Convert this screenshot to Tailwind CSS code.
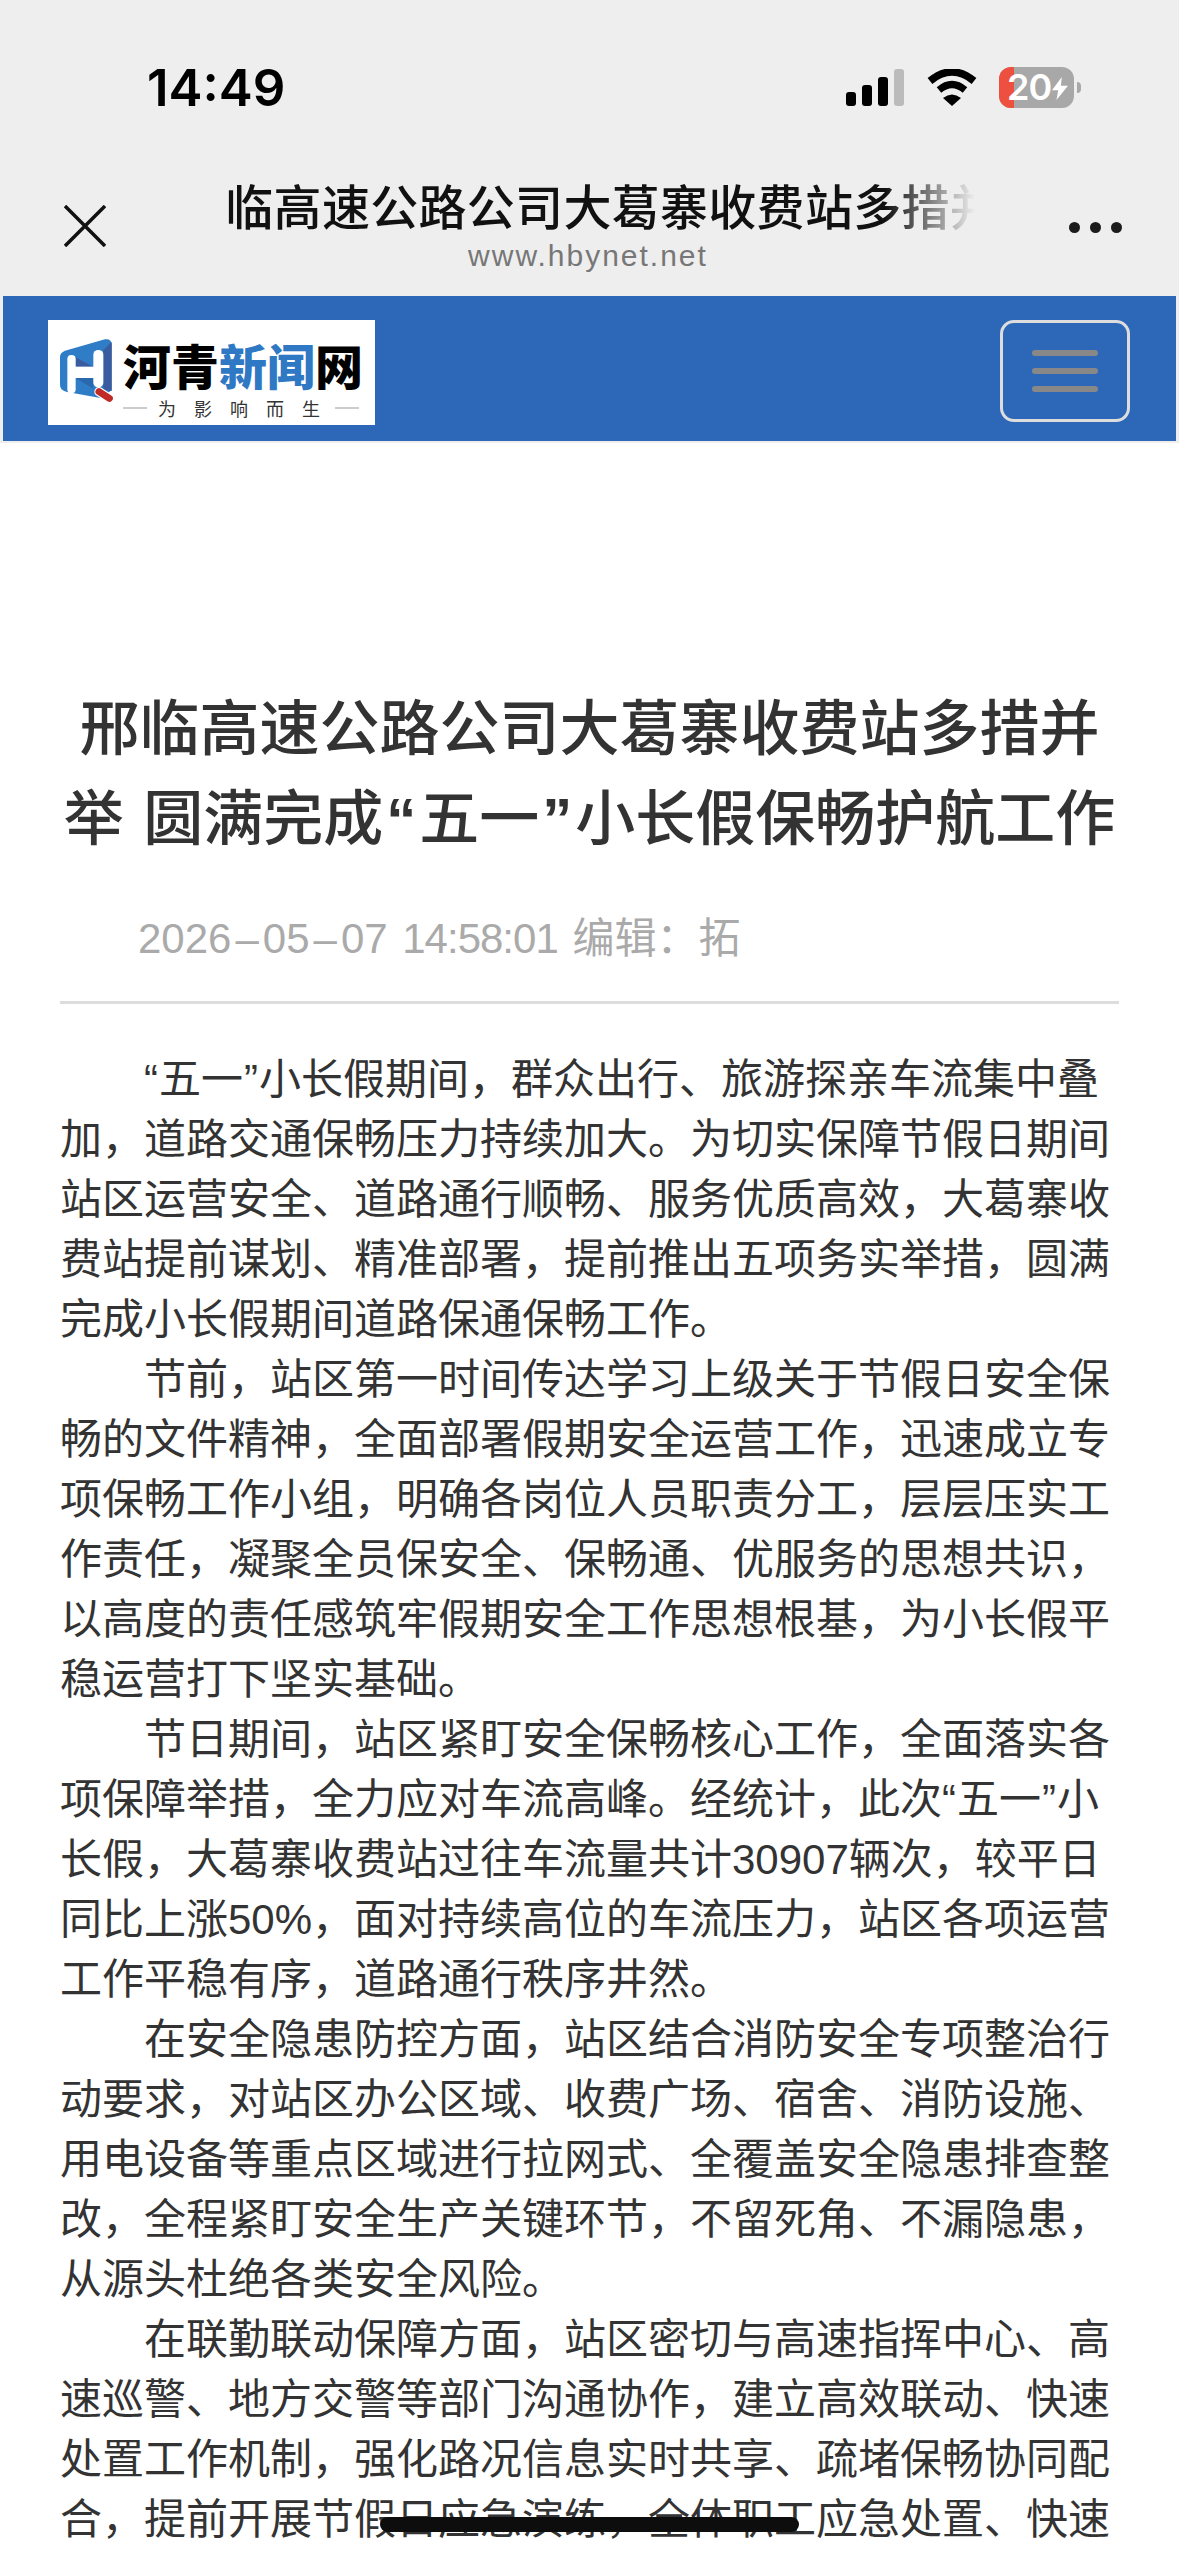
<!DOCTYPE html>
<html lang="zh-CN">
<head>
  <meta charset="UTF-8">
  <meta name="viewport" content="width=device-width, initial-scale=1.0">
  <title>邢临高速公路公司大葛寨收费站多措并举 圆满完成“五一”小长假保畅护航工作</title>
  <script src="https://cdn.jsdelivr.net/npm/@tailwindcss/browser@4"></script>
</head>
<body class="bg-white font-['Liberation_Sans','Noto_Sans_CJK_SC',sans-serif]">
  <div class="relative w-[1179px] h-[2556px] overflow-hidden">
    <!-- browser chrome -->
    <div class="h-[296px] bg-[#eeeeee]">
      <div class="flex h-[116px] pt-[60px]">
        <div class="ml-[147px] w-[135px] h-[56px] text-[51px] leading-[56px] font-semibold text-black font-['Inter',sans-serif]">14:49</div>
        <svg class="ml-[564px] mt-[9px]" width="58" height="37" viewBox="0 0 58 37">
          <rect x="0" y="23" width="10" height="14" rx="3" fill="#000"/>
          <rect x="16" y="16" width="10" height="21" rx="3" fill="#000"/>
          <rect x="32" y="8" width="10" height="29" rx="3" fill="#000"/>
          <rect x="48" y="0" width="10" height="37" rx="3" fill="#bbbbbb"/>
        </svg>
        <svg class="ml-[23px] mt-[9px]" width="50" height="37" viewBox="0 0 50 37">
          <path d="M3 12 Q25 -6 47 12" fill="none" stroke="#000" stroke-width="7.5"/>
          <path d="M12 21 Q25 10 38 21" fill="none" stroke="#000" stroke-width="7"/>
          <path d="M25 37 L16 29 Q25 22 34 29 Z" fill="#000"/>
        </svg>
        <div class="relative ml-[22px] mt-[7px] w-[75px] h-[41px] rounded-[12px] overflow-hidden bg-[#a8a8a8]">
          <div class="w-[15px] h-full bg-[#ee5040]"></div>
          <div class="absolute left-[8px] top-0 h-[41px] text-[36px] leading-[41px] font-semibold tracking-[-1px] text-white font-['Inter',sans-serif]">20</div>
          <svg class="absolute left-[53px] top-[8px]" width="16" height="27" viewBox="0 0 18 26">
            <path d="M11 0 L0 15 H7 L5 26 L18 10 H10 Z" fill="#fff"/>
          </svg>
        </div>
        <div class="ml-[3px] mt-[22px] w-[4px] h-[11px] rounded-r-full bg-[#a8a8a8]"></div>
      </div>
      <div class="flex h-[180px] pl-[64px]">
        <svg class="mt-[89px] shrink-0" width="42" height="42" viewBox="0 0 42 42">
          <path d="M1 1 L41 41 M41 1 L1 41" stroke="#111" stroke-width="3.5"/>
        </svg>
        <div class="ml-[119px] w-[750px] shrink-0">
          <div class="mt-[63px] h-[60px] overflow-hidden whitespace-nowrap text-[48px] leading-[60px] font-medium tracking-[0.3px] text-[#111111] [mask-image:linear-gradient(to_right,black_88%,transparent_100%)]">
            <span class="block -ml-[48px]">邢临高速公路公司大葛寨收费站多措并举 圆满完成“五一”小长假保畅护航工作</span>
          </div>
          <div class="-mt-[1px] h-[36px] pr-[24px] text-center text-[30px] leading-[36px] tracking-[2px] text-[#777777]">www.hbynet.net</div>
        </div>
        <div class="ml-[94px] mt-[106px] flex gap-[10px]">
          <span class="w-[11px] h-[11px] rounded-full bg-[#1c1c1c]"></span>
          <span class="w-[11px] h-[11px] rounded-full bg-[#1c1c1c]"></span>
          <span class="w-[11px] h-[11px] rounded-full bg-[#1c1c1c]"></span>
        </div>
      </div>
    </div>

    <!-- site header -->
    <div class="bg-[#eeeeee] px-[3px] pb-[2px]">
      <div class="flex h-[145px] items-start justify-between bg-[#2d68b8] pl-[45px] pr-[46px] pt-[24px]">
        <div class="relative flex w-[327px] h-[105px] bg-white pl-[11px] pt-[19px]">
          <svg class="shrink-0" width="54" height="66" viewBox="27 27 162 198">
            <path d="M45 62 L165 28 Q185 25 185 45 L185 180 L155 205 L48 185 Q30 180 30 165 L30 80 Q30 68 45 62Z" fill="#2f7cc7"/>
            <path d="M160 60 L185 36 L185 183 L160 180Z" fill="#3a5c9e"/>
            <path d="M77 82 L130 110 L77 110Z" fill="#3a5c9e"/>
            <path d="M77 144 H130 V176Z" fill="#2a68ad"/>
            <rect x="52" y="75" width="25" height="115" rx="12" fill="#fff"/>
            <rect x="130" y="60" width="30" height="112" rx="14" fill="#fff"/>
            <rect x="70" y="110" width="65" height="34" fill="#fff"/>
            <path d="M147 185 L178 205" stroke="#fff" stroke-width="28" stroke-linecap="round"/>
            <path d="M147 185 L178 205" stroke="#c02b27" stroke-width="21" stroke-linecap="round"/>
          </svg>
          <div class="ml-[10px] w-[237px]">
            <div class="h-[50px] whitespace-nowrap text-[48px] leading-[50px] font-black font-['Noto_Sans_CJK_SC',sans-serif] text-black">河青<span class="text-[#2f78c4]">新闻</span>网</div>
            <div class="mt-[7px] flex h-[24px] items-center text-[18px] leading-[24px] text-[#333333] font-['Noto_Sans_CJK_SC',sans-serif]">
              <span class="w-[24px] h-[2px] bg-[#cccccc]"></span>
              <div class="mx-[11px] mr-[15px] flex gap-[18px]">
                <span>为</span><span>影</span><span>响</span><span>而</span><span>生</span>
              </div>
              <span class="w-[24px] h-[2px] bg-[#cccccc]"></span>
            </div>
          </div>
        </div>
        <div class="flex flex-col items-center gap-[12px] w-[130px] h-[102px] rounded-[14px] border-[3px] border-[#dddddd] pt-[27px]">
          <span class="w-[66px] h-[6px] rounded-full bg-[#888888]"></span>
          <span class="w-[66px] h-[6px] rounded-full bg-[#888888]"></span>
          <span class="w-[66px] h-[6px] rounded-full bg-[#888888]"></span>
        </div>
      </div>
    </div>

    <!-- article -->
    <div class="px-[60px] pt-[242px]">
      <h1 class="text-center text-[60px] leading-[90px] font-medium text-[#333333] [word-spacing:3px]">邢临高速公路公司大葛寨收费站多措并举 圆满完成<span class="font-bold px-[3px]">“</span>五一<span class="font-bold px-[3px]">”</span>小长假保畅护航工作</h1>
      <div class="mt-[44px] pl-[78px] text-[42px] leading-[60px] text-[#aaaaaa] [word-spacing:3px]">2026<span class="mx-[4px]">–</span>05<span class="mx-[4px]">–</span>07 <span class="tracking-[-1px]">14:58:01</span> 编辑：拓</div>
      <div class="mt-[32px] h-[3px] bg-[#dddddd]"></div>
      <div class="mt-[46px] text-[42px] leading-[60px] text-[#333333]">
        <p class="indent-[84px]"><span class="pr-[1px]">“</span>五一<span class="px-[1px]">”</span>小长假期间，群众出行、旅游探亲车流集中叠加，道路交通保畅压力持续加大。为切实保障节假日期间站区运营安全、道路通行顺畅、服务优质高效，大葛寨收费站提前谋划、精准部署，提前推出五项务实举措，圆满完成小长假期间道路保通保畅工作。</p>
        <p class="indent-[84px]">节前，站区第一时间传达学习上级关于节假日安全保畅的文件精神，全面部署假期安全运营工作，迅速成立专项保畅工作小组，明确各岗位人员职责分工，层层压实工作责任，凝聚全员保安全、保畅通、优服务的思想共识，以高度的责任感筑牢假期安全工作思想根基，为小长假平稳运营打下坚实基础。</p>
        <p class="indent-[84px]">节日期间，站区紧盯安全保畅核心工作，全面落实各项保障举措，全力应对车流高峰。经统计，此次<span class="pr-[1px]">“</span>五一<span class="px-[1px]">”</span>小长假，大葛寨收费站过往车流量共计30907辆次，较平日同比上涨50%，面对持续高位的车流压力，站区各项运营工作平稳有序，道路通行秩序井然。</p>
        <p class="indent-[84px]">在安全隐患防控方面，站区结合消防安全专项整治行动要求，对站区办公区域、收费广场、宿舍、消防设施、用电设备等重点区域进行拉网式、全覆盖安全隐患排查整改，全程紧盯安全生产关键环节，不留死角、不漏隐患，从源头杜绝各类安全风险。</p>
        <p class="indent-[84px]">在联勤联动保障方面，站区密切与高速指挥中心、高速巡警、地方交警等部门沟通协作，建立高效联动、快速处置工作机制，强化路况信息实时共享、疏堵保畅协同配合，提前开展节假日应急演练，全体职工应急处置、快速</p>
      </div>
    </div>

    <!-- home indicator -->
    <div class="absolute left-[380px] top-[2517px] w-[419px] h-[15px] rounded-full bg-[#0d0d0d]"></div>
  </div>
</body>
</html>
